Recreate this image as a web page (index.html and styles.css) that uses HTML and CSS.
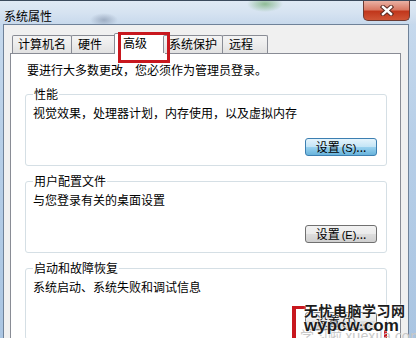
FILE: index.html
```html
<!DOCTYPE html>
<html lang="zh-CN">
<head>
    <meta charset="UTF-8">
    <meta name="viewport" content="width=device-width, initial-scale=1.0">
    <title>系统属性</title>
    <link rel="stylesheet" href="styles.css">
</head>
<body>
    <!-- System Properties window -->
    <div class="window">
        <div class="titlebar">
            <span class="title">系统属性</span>
            <div class="close-btn">
                <svg width="14" height="11" viewBox="0 0 14 11">
                    <path d="M3 2 L11 9 M11 2 L3 9" stroke="#5a2a22" stroke-width="4.4" stroke-linecap="square"/>
                    <path d="M3 2 L11 9 M11 2 L3 9" stroke="#ffffff" stroke-width="2.4" stroke-linecap="square"/>
                </svg>
            </div>
        </div>

        <div class="client">
            <!-- Tabs -->
            <div class="tabs">
                <div class="tab tab-wide">计算机名</div>
                <div class="tab">硬件</div>
                <div class="tab active">高级</div>
                <div class="tab tab-wide">系统保护</div>
                <div class="tab">远程</div>
            </div>

            <div class="panel">
                <p class="intro">要进行大多数更改，您必须作为管理员登录。</p>

                <fieldset class="group">
                    <legend>性能</legend>
                    <p class="desc">视觉效果，处理器计划，内存使用，以及虚拟内存</p>
                    <div class="actions">
                        <button class="btn btn-default">设置<span class="key">(S)</span>...</button>
                    </div>
                </fieldset>

                <fieldset class="group">
                    <legend>用户配置文件</legend>
                    <p class="desc">与您登录有关的桌面设置</p>
                    <div class="actions">
                        <button class="btn">设置<span class="key">(E)</span>...</button>
                    </div>
                </fieldset>

                <fieldset class="group">
                    <legend>启动和故障恢复</legend>
                    <p class="desc">系统启动、系统失败和调试信息</p>
                    <div class="actions">
                        <button class="btn">设置<span class="key">(T)</span>...</button>
                    </div>
                </fieldset>
            </div>
        </div>

        <!-- red highlight on the selected tab -->
        <div class="highlight"></div>

        <!-- watermark -->
        <div class="mark-corner"></div>
        <div class="mark-edge"></div>
        <div class="mark-faint">学习啦 xuexila.com</div>
        <div class="mark">
            <div class="mark-cn">无忧电脑学习网</div>
            <div class="mark-en">wypcw.com</div>
        </div>
    </div>
</body>
</html>
```

FILE: styles.css
```css
body {
    margin: 0;
    padding: 0;
    font-family: "Noto Sans CJK SC", "Noto Sans", sans-serif;
    font-size: 12px;
    color: #000;
    background-color: #b9d1ea;
}

.window {
    position: relative;
    width: 416px;
    height: 338px;
    overflow: hidden;
    display: flex;
    flex-direction: column;
    background: linear-gradient(to bottom, #c9dbee 0%, #b7cfe8 40%, #aac5e2 100%);
}

/* Title bar */
.titlebar {
    height: 29px;
    display: flex;
    align-items: flex-start;
    justify-content: space-between;
    background:
        radial-gradient(ellipse 18px 8px at 265px 3px, rgba(110, 170, 110, 0.7), transparent),
        radial-gradient(ellipse 14px 7px at 104px 19px, rgba(120, 135, 160, 0.55), transparent),
        linear-gradient(to bottom, #dfe9f4 0%, #d6e3f1 50%, #c8d9ec 100%);
    border-top: 1px solid #3b4a5c;
}

.title {
    margin: 7px 0 0 4px;
    line-height: 16px;
}

.close-btn {
    width: 45px;
    height: 19px;
    margin-right: 6px;
    border: 1px solid #6b3a32;
    border-top: none;
    border-radius: 0 0 5px 5px;
    background: linear-gradient(to bottom, #eab1a4 0%, #d97a65 45%, #c1371c 55%, #cf5536 100%);
    display: flex;
    align-items: center;
    justify-content: center;
}

/* Client area */
.client {
    flex: 1;
    margin: 0 7px 0 3px;
    padding: 8px 7px 0 6px;
    background-color: #f0f0f0;
    border: 1px solid #6f8299;
    border-bottom: none;
}

.tabs {
    display: flex;
    align-items: flex-end;
    height: 20px;
    padding-left: 3px;
    position: relative;
    z-index: 1;
}

.tab {
    box-sizing: border-box;
    height: 18px;
    min-width: 46px;
    padding: 0 6px;
    margin-left: -1px;
    line-height: 16px;
    border: 1px solid #898c95;
    border-bottom: none;
    border-radius: 2px 2px 0 0;
    background: linear-gradient(to bottom, #f4f4f4 0%, #ececec 50%, #e1e1e1 100%);
}

.tab-wide {
    padding: 0 5px;
}

.tab.active {
    height: 21px;
    margin: 0 -2px -1px -3px;
    min-width: 52px;
    padding: 1px 8px 0 8px;
    background: #fff;
}

.panel {
    height: 300px;
    padding: 8px 13px 0 14px;
    background-color: #fff;
    border: 1px solid #898c95;
}

.intro {
    margin: 0 0 9px 2px;
    line-height: 16px;
}

/* Group boxes */
.group {
    margin: 0 0 8px 0;
    padding: 0 9px 9px 7px;
    min-width: 0;
    border: 1px solid #d5dfe5;
    border-radius: 3px;
}

.group legend {
    padding: 0 1px;
    line-height: 14px;
}

.desc {
    margin: 4px 0 0 0;
    line-height: 16px;
}

.actions {
    display: flex;
    justify-content: flex-end;
    margin-top: 17px;
}

.btn {
    box-sizing: border-box;
    width: 72px;
    height: 18px;
    padding: 0;
    font-family: "Noto Sans CJK SC", "Noto Sans", sans-serif;
    font-size: 12px;
    line-height: 14px;
    color: #000;
    border: 1px solid #707070;
    border-radius: 3px;
    background: linear-gradient(to bottom, #f2f2f2 0%, #ebebeb 48%, #dddddd 52%, #cfcfcf 100%);
}

.btn-default {
    border-color: #3c7fb1;
    background: linear-gradient(to bottom, #e5f4fc 0%, #c4e5f6 48%, #98d1ef 52%, #68b3db 100%);
}

.key {
    font-family: "Liberation Sans", sans-serif;
    font-size: 11px;
    margin-left: 2px;
}

/* Annotations over the screenshot */
.highlight {
    position: absolute;
    left: 118px;
    top: 32px;
    width: 46px;
    height: 25px;
    border: 3px solid #c8171e;
    z-index: 2;
}

.mark-corner {
    position: absolute;
    left: 292px;
    top: 306px;
    width: 10px;
    height: 40px;
    border-left: 4px solid #c8171e;
    border-top: 3px solid #c8171e;
}

.mark-edge {
    position: absolute;
    left: 384px;
    top: 330px;
    width: 3px;
    height: 10px;
    background-color: #c8171e;
}

.mark-faint {
    position: absolute;
    left: 300px;
    top: 325px;
    font-size: 14px;
    color: #c9c9c9;
    white-space: nowrap;
}

.mark {
    position: absolute;
    left: 304px;
    top: 302px;
    color: #1c1c1c;
    text-shadow: 0 0 2px #fff, 0 0 2px #fff;
}

.mark-cn {
    font-size: 14px;
    font-weight: bold;
    line-height: 16px;
    letter-spacing: 0.5px;
}

.mark-en {
    font-family: "Liberation Sans", Arial, sans-serif;
    font-size: 17px;
    font-weight: bold;
    line-height: 16px;
}
```
